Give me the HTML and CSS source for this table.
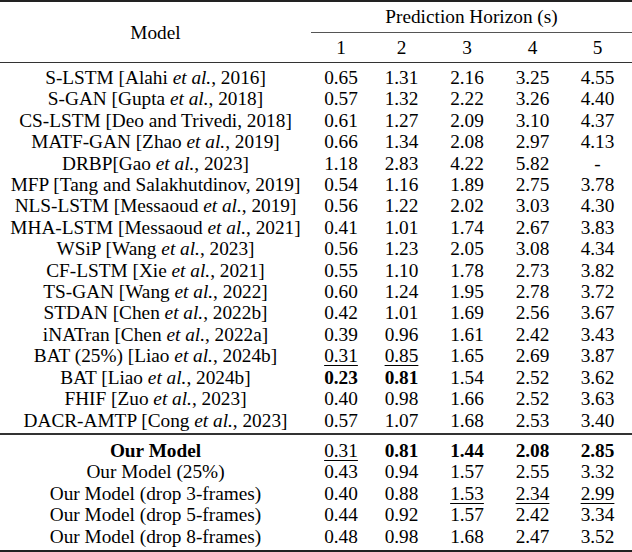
FILE: index.html
```html
<!DOCTYPE html>
<html>
<head>
<meta charset="utf-8">
<link rel="stylesheet" href="styles.css">
</head>
<body>
<table class="results">
  <colgroup>
    <col class="c-model">
    <col class="c1">
    <col class="c2">
    <col class="c3">
    <col class="c4">
    <col class="c5">
  </colgroup>
  <thead>
    <tr class="h1">
      <th rowspan="2" class="model-h">Model</th>
      <th colspan="5" class="group-h">Prediction Horizon (s)</th>
    </tr>
    <tr class="h2">
      <th>1</th><th>2</th><th>3</th><th>4</th><th>5</th>
    </tr>
  </thead>
  <tbody class="baselines">
    <tr class="first"><td>S-LSTM [Alahi <i>et al.</i>, 2016]</td><td>0.65</td><td>1.31</td><td>2.16</td><td>3.25</td><td>4.55</td></tr>
    <tr><td>S-GAN [Gupta <i>et al.</i>, 2018]</td><td>0.57</td><td>1.32</td><td>2.22</td><td>3.26</td><td>4.40</td></tr>
    <tr><td>CS-LSTM [Deo and Trivedi, 2018]</td><td>0.61</td><td>1.27</td><td>2.09</td><td>3.10</td><td>4.37</td></tr>
    <tr><td>MATF-GAN [Zhao <i>et al.</i>, 2019]</td><td>0.66</td><td>1.34</td><td>2.08</td><td>2.97</td><td>4.13</td></tr>
    <tr><td>DRBP[Gao <i>et al.</i>, 2023]</td><td>1.18</td><td>2.83</td><td>4.22</td><td>5.82</td><td>-</td></tr>
    <tr><td>MFP [Tang and Salakhutdinov, 2019]</td><td>0.54</td><td>1.16</td><td>1.89</td><td>2.75</td><td>3.78</td></tr>
    <tr><td>NLS-LSTM [Messaoud <i>et al.</i>, 2019]</td><td>0.56</td><td>1.22</td><td>2.02</td><td>3.03</td><td>4.30</td></tr>
    <tr><td>MHA-LSTM [Messaoud <i>et al.</i>, 2021]</td><td>0.41</td><td>1.01</td><td>1.74</td><td>2.67</td><td>3.83</td></tr>
    <tr><td>WSiP [Wang <i>et al.</i>, 2023]</td><td>0.56</td><td>1.23</td><td>2.05</td><td>3.08</td><td>4.34</td></tr>
    <tr><td>CF-LSTM [Xie <i>et al.</i>, 2021]</td><td>0.55</td><td>1.10</td><td>1.78</td><td>2.73</td><td>3.82</td></tr>
    <tr><td>TS-GAN [Wang <i>et al.</i>, 2022]</td><td>0.60</td><td>1.24</td><td>1.95</td><td>2.78</td><td>3.72</td></tr>
    <tr><td>STDAN [Chen <i>et al.</i>, 2022b]</td><td>0.42</td><td>1.01</td><td>1.69</td><td>2.56</td><td>3.67</td></tr>
    <tr><td>iNATran [Chen <i>et al.</i>, 2022a]</td><td>0.39</td><td>0.96</td><td>1.61</td><td>2.42</td><td>3.43</td></tr>
    <tr><td>BAT (25%) [Liao <i>et al.</i>, 2024b]</td><td><u>0.31</u></td><td><u>0.85</u></td><td>1.65</td><td>2.69</td><td>3.87</td></tr>
    <tr><td>BAT [Liao <i>et al.</i>, 2024b]</td><td><b>0.23</b></td><td><b>0.81</b></td><td>1.54</td><td>2.52</td><td>3.62</td></tr>
    <tr><td>FHIF [Zuo <i>et al.</i>, 2023]</td><td>0.40</td><td>0.98</td><td>1.66</td><td>2.52</td><td>3.63</td></tr>
    <tr class="last"><td>DACR-AMTP [Cong <i>et al.</i>, 2023]</td><td>0.57</td><td>1.07</td><td>1.68</td><td>2.53</td><td>3.40</td></tr>
  </tbody>
  <tbody class="ours">
    <tr class="first"><td><b>Our Model</b></td><td><u>0.31</u></td><td><b>0.81</b></td><td><b>1.44</b></td><td><b>2.08</b></td><td><b>2.85</b></td></tr>
    <tr><td>Our Model (25%)</td><td>0.43</td><td>0.94</td><td>1.57</td><td>2.55</td><td>3.32</td></tr>
    <tr><td>Our Model (drop 3-frames)</td><td>0.40</td><td>0.88</td><td><u>1.53</u></td><td><u>2.34</u></td><td><u>2.99</u></td></tr>
    <tr><td>Our Model (drop 5-frames)</td><td>0.44</td><td>0.92</td><td>1.57</td><td>2.42</td><td>3.34</td></tr>
    <tr class="last"><td>Our Model (drop 8-frames)</td><td>0.48</td><td>0.98</td><td>1.68</td><td>2.47</td><td>3.52</td></tr>
  </tbody>
</table>
</body>
</html>
```

FILE: styles.css
```css
html, body {
  margin: 0;
  padding: 0;
  background: #ffffff;
}

.results {
  width: 632px;
  border-collapse: collapse;
  table-layout: fixed;
  font-family: "Liberation Serif", "Times New Roman", serif;
  font-size: 19.3px;
  color: #000000;
  border-top: 2px solid #222222;
  border-bottom: 3px solid #222222;
}

.c-model { width: 311px; }
.c1 { width: 60px; }
.c2 { width: 61px; }
.c3 { width: 70px; }
.c4 { width: 61px; }
.c5 { width: 69px; }

.results th,
.results td {
  padding: 0;
  text-align: center;
  font-weight: normal;
  white-space: nowrap;
  line-height: 21.4px;
  height: 21.4px;
  vertical-align: middle;
}

.results .h1 th {
  height: 30px;
}

.results .h2 th {
  height: 29px;
}

.results .model-h {
  padding-top: 2px;
}

.results .group-h {
  border-bottom: 1px solid #555555;
}

.results thead {
  border-bottom: 1px solid #333333;
}

.results .baselines .first td { padding-top: 4px; }
.results .baselines .last td { padding-bottom: 2px; }

.results .baselines {
  border-bottom: 2px solid #333333;
}

.results .ours .first td { padding-top: 5px; }
.results .ours .last td { padding-bottom: 3px; }

.results u {
  text-decoration: underline;
  text-decoration-thickness: 1px;
  text-underline-offset: 3px;
}

.results b {
  font-weight: bold;
}
```
